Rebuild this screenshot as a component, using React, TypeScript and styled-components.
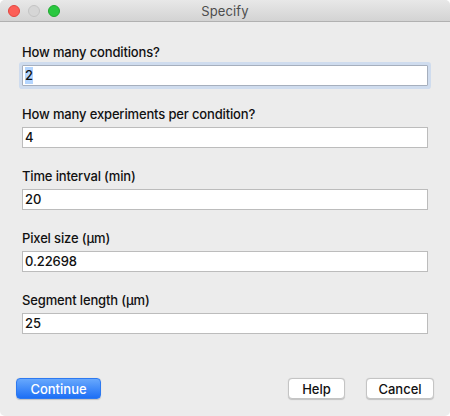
import React from "react";
import styled, { createGlobalStyle } from "styled-components";

const Global = createGlobalStyle`
  html, body { margin: 0; padding: 0; background: #ffffff; }
  body { font-family: Inter, "Liberation Sans", sans-serif; -webkit-font-smoothing: antialiased; }
  * { box-sizing: border-box; }
`;

const Window = styled.div`
  width: 450px;
  height: 416px;
  background: #ececec;
  border-radius: 5px;
  overflow: hidden;
  display: flex;
  flex-direction: column;
`;

const TitleBar = styled.div`
  height: 22px;
  flex: none;
  background: linear-gradient(#e8e8e8, #d3d3d3);
  border-bottom: 1px solid #b1b1b1;
  display: grid;
  grid-template-columns: 1fr auto 1fr;
  align-items: center;
`;

const Lights = styled.div`
  display: flex;
  gap: 8px;
  padding-left: 8px;
`;

const Light = styled.span<{ $c: string; $b: string }>`
  width: 12px;
  height: 12px;
  border-radius: 50%;
  background: ${(p) => p.$c};
  border: 0.5px solid ${(p) => p.$b};
`;

const Title = styled.div`
  font-size: 13px;
  color: #4d4d4d;
  letter-spacing: 0.1px;
`;

const Body = styled.div`
  flex: 1;
  display: flex;
  flex-direction: column;
  padding: 22px 22px 17px 22px;
`;

const Fields = styled.div`
  display: flex;
  flex-direction: column;
  gap: 20px;
`;

const Field = styled.div`
  display: flex;
  flex-direction: column;
  gap: 5px;
`;

const Label = styled.div`
  font-size: 13px;
  font-weight: 500;
  letter-spacing: -0.15px;
  line-height: 16px;
  color: #111;
`;

const TextBox = styled.div<{ $focused?: boolean }>`
  width: 406px;
  height: 21px;
  background: #fff;
  border: 1px solid ${(p) => (p.$focused ? "#a6afbd" : "#bcbcbc")};
  box-shadow: ${(p) => (p.$focused ? "0 0 0 3px #cfdcee" : "none")};
  border-radius: ${(p) => (p.$focused ? "1px" : "0")};
  font-size: 13px;
  font-weight: 500;
  letter-spacing: -0.1px;
  line-height: 19px;
  color: #111;
  padding: 0 2px;
`;

const Selected = styled.span`
  background: #b4d5fe;
  display: inline-block;
  line-height: 17px;
`;

const Footer = styled.div`
  margin-top: auto;
  display: flex;
  align-items: center;
  margin-left: -6px;
  margin-right: -6px;
`;

const Spacer = styled.div`
  flex: 1;
`;

const Button = styled.button<{ $primary?: boolean; $w: number }>`
  width: ${(p) => p.$w}px;
  height: 21px;
  border-radius: 4px;
  font-family: inherit;
  font-size: 13px;
  font-weight: 500;
  padding: 0;
  color: ${(p) => (p.$primary ? "#fff" : "#111")};
  background: ${(p) => (p.$primary ? "linear-gradient(#67a8fd, #1d6ff5)" : "#fff")};
  border: 0.5px solid ${(p) => (p.$primary ? "#2d79f0" : "#c4c4c4")};
  box-shadow: 0 0.5px 1px rgba(0, 0, 0, 0.18);
  & + & { margin-left: 21px; }
`;

const fields = [
  { label: "How many conditions?", value: "2", focused: true },
  { label: "How many experiments per condition?", value: "4" },
  { label: "Time interval (min)", value: "20" },
  { label: "Pixel size (µm)", value: "0.22698" },
  { label: "Segment length (µm)", value: "25" },
];

export default function App() {
  return (
    <>
      <Global />
      <Window>
        <TitleBar>
          <Lights>
            <Light $c="#fc5f57" $b="#e2463f" />
            <Light $c="#d6d6d6" $b="#c3c3c3" />
            <Light $c="#2ac840" $b="#1fa82f" />
          </Lights>
          <Title>Specify</Title>
          <div />
        </TitleBar>
        <Body>
          <Fields>
            {fields.map((f) => (
              <Field key={f.label}>
                <Label>{f.label}</Label>
                <TextBox $focused={f.focused}>
                  {f.focused ? <Selected>{f.value}</Selected> : f.value}
                </TextBox>
              </Field>
            ))}
          </Fields>
          <Footer>
            <Button $primary $w={85}>Continue</Button>
            <Spacer />
            <Button $w={57}>Help</Button>
            <Button $w={68}>Cancel</Button>
          </Footer>
        </Body>
      </Window>
    </>
  );
}
